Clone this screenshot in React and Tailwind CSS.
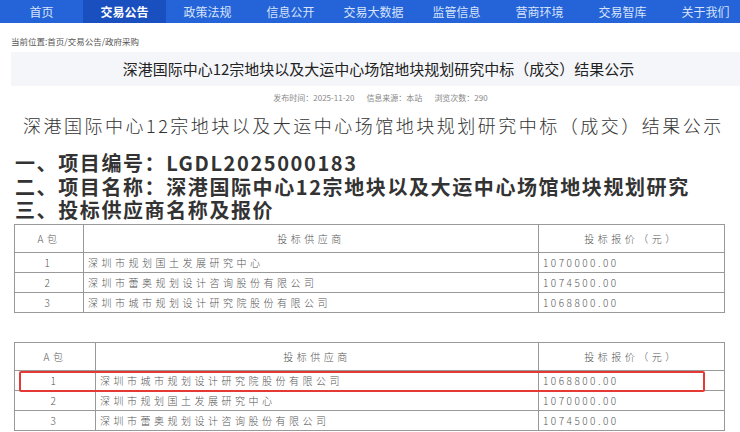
import React from 'react';

const navItems = ['首页', '交易公告', '政策法规', '信息公开', '交易大数据', '监管信息', '营商环境', '交易智库', '关于我们'];

const table1 = [
  { no: '1', name: '深圳市规划国土发展研究中心', price: '1070000.00' },
  { no: '2', name: '深圳市蕾奥规划设计咨询股份有限公司', price: '1074500.00' },
  { no: '3', name: '深圳市城市规划设计研究院股份有限公司', price: '1068800.00' },
];

const table2 = [
  { no: '1', name: '深圳市城市规划设计研究院股份有限公司', price: '1068800.00' },
  { no: '2', name: '深圳市规划国土发展研究中心', price: '1070000.00' },
  { no: '3', name: '深圳市蕾奥规划设计咨询股份有限公司', price: '1074500.00' },
];

const cjk = { fontFamily: "'Noto Sans CJK SC', 'Noto Sans', sans-serif" };

const BidTable = ({ rows, firstCol, highlight }) => (
  <div className="relative">
    <table className="w-[711px] border-collapse text-[10px] text-[#555] tracking-[3.5px] font-light" style={cjk}>
      <colgroup>
        <col style={{ width: firstCol }} />
        <col />
        <col style={{ width: 186 }} />
      </colgroup>
      <thead>
        <tr className="h-[28px]">
          <th className="border border-[#999] font-light text-center">A包</th>
          <th className="border border-[#999] font-light text-center">投标供应商</th>
          <th className="border border-[#999] font-light text-center">投标报价（元）</th>
        </tr>
      </thead>
      <tbody>
        {rows.map((r) => (
          <tr key={r.no} className="h-[20px]">
            <td className="border border-[#999] text-center">{r.no}</td>
            <td className="border border-[#999] pl-[4px]">{r.name}</td>
            <td className="border border-[#999] pl-[4px] tracking-[2.5px]">{r.price}</td>
          </tr>
        ))}
      </tbody>
    </table>
    {highlight && (
      <div className="absolute left-[5px] top-[29px] w-[686px] h-[21px] border-2 border-[#e53935] rounded-[2px] z-10" />
    )}
  </div>
);

export default function App() {
  return (
    <div className="w-[740px] h-[432px] overflow-hidden bg-white flex" style={cjk}>
      <div className="w-[2px] bg-[#cfe2f6]" />
      <div className="flex-1 flex flex-col">
        <nav className="h-[23px] bg-[#2563d8] flex">
          {navItems.map((item, i) => (
            <div
              key={item}
              className={`w-[83px] shrink-0 flex items-center justify-center text-[12px] ${i === 1 ? 'bg-[#1a4fbf] text-white font-bold' : 'text-[#d7e3fb]'}`}
            >
              {item}
            </div>
          ))}
        </nav>

        <div className="pl-[11px] pt-[12px] text-[8.5px] text-[#555] leading-[12px]">当前位置:首页/交易公告/政府采购</div>

        <div className="ml-[11px] mr-[1px] mt-[5px] h-[34px] bg-[#f5f6fa] flex items-center justify-center text-[15px] text-[#222]">
          深港国际中心12宗地块以及大运中心场馆地块规划研究中标（成交）结果公示
        </div>

        <div className="mt-[7px] flex justify-center gap-[12px] text-[8px] text-[#888] leading-[10px] pl-[14px]">
          <span>发布时间：2025-11-20</span>
          <span>信息来源：本站</span>
          <span>浏览次数：290</span>
        </div>

        <div className="mt-[10px] pl-[23px] text-[18px] font-light text-[#333] tracking-[2.5px] leading-[24px] whitespace-nowrap">
          深港国际中心12宗地块以及大运中心场馆地块规划研究中标（成交）结果公示
        </div>

        <div className="mt-[14px] pl-[15px] text-[20px] font-bold text-[#333] tracking-[1.6px] leading-[23.5px] whitespace-nowrap">
          <div>一、项目编号：LGDL2025000183</div>
          <div>二、项目名称：深港国际中心12宗地块以及大运中心场馆地块规划研究</div>
          <div>三、投标供应商名称及报价</div>
        </div>

        <div className="mt-[2px] pl-[14px]">
          <BidTable rows={table1} firstCol={69} />
        </div>

        <div className="mt-[29px] pl-[14px]">
          <BidTable rows={table2} firstCol={81} highlight />
        </div>
      </div>
    </div>
  );
}
